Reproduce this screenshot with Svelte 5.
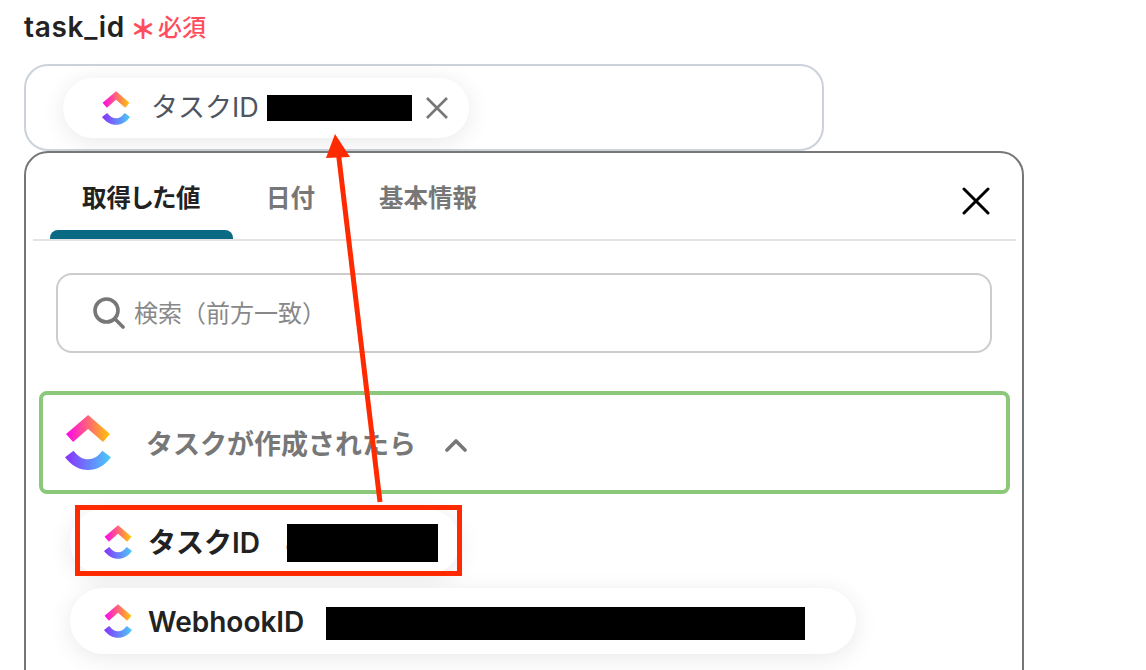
<script lang="ts">
	const tabs = ['取得した値', '日付', '基本情報'];
</script>

{#snippet logo(cls: string)}
	<svg class={cls} viewBox="2 0 20 24">
		<path fill="url(#cu-bottom)" d="M2 18.439l3.69-2.828c1.961 2.56 4.044 3.739 6.363 3.739 2.307 0 4.33-1.166 6.203-3.704L22 18.405C19.298 22.065 15.941 24 12.053 24 8.178 24 4.788 22.078 2 18.439z"/>
		<path fill="url(#cu-top)" d="M12.04 6.15l-6.568 5.66-3.036-3.52L12.055 0l9.543 8.296-3.05 3.509z"/>
	</svg>
{/snippet}

<div class="page">
	<svg class="defs" width="0" height="0" aria-hidden="true">
		<defs>
			<linearGradient id="cu-bottom" gradientUnits="userSpaceOnUse" x1="2" y1="20" x2="22" y2="20">
				<stop offset="0" stop-color="#8930fd"/>
				<stop offset="1" stop-color="#49ccf9"/>
			</linearGradient>
			<linearGradient id="cu-top" gradientUnits="userSpaceOnUse" x1="2.4" y1="6" x2="21.6" y2="6">
				<stop offset="0" stop-color="#ff02f0"/>
				<stop offset="1" stop-color="#ffc800"/>
			</linearGradient>
		</defs>
	</svg>

	<div class="label">
		<span class="name">task_id</span>
		<span class="star">＊</span>
		<span class="req">必須</span>
	</div>

	<div class="field">
		<div class="tag">
			{@render logo('logo-sm')}
			<span class="tag-text">タスクID</span>
			<span class="redact tag-redact"></span>
			<svg class="tag-x" viewBox="0 0 22 22" width="22" height="22">
				<path d="M1 1l20 20M21 1L1 21" stroke="#777" stroke-width="2.6" fill="none"/>
			</svg>
		</div>
	</div>

	<div class="panel">
		<div class="header">
			<div class="tabs">
				{#each tabs as tab, i}
					<div class="tab" class:active={i === 0}>
						<span class="tab-text">{tab}</span>
						<span class="bar"></span>
					</div>
				{/each}
			</div>
			<svg class="close" viewBox="0 0 28 28" width="28" height="28">
				<path d="M2 2l24 24M26 2L2 26" stroke="#000" stroke-width="3" stroke-linecap="round" fill="none"/>
			</svg>
		</div>

		<div class="search">
			<svg viewBox="0 0 32 32" width="32" height="32">
				<circle cx="13.5" cy="13.5" r="11.5" stroke="#777" stroke-width="3.6" fill="none"/>
				<path d="M22 22l8 8" stroke="#777" stroke-width="3.6" stroke-linecap="round"/>
			</svg>
			<span>検索（前方一致）</span>
		</div>

		<div class="group">
			{@render logo('logo-lg')}
			<span class="group-text">タスクが作成されたら</span>
			<svg class="chev" viewBox="0 0 22 14" width="22" height="14">
				<path d="M2 12l9-9 9 9" stroke="#777" stroke-width="3.6" stroke-linecap="round" stroke-linejoin="round" fill="none"/>
			</svg>
		</div>

		<div class="results">
			<div class="item first">
				{@render logo('logo-sm')}
				<span class="item-text">タスクID</span>
				<span class="val">8</span>
				<span class="redact r1"></span>
			</div>
			<div class="item second">
				{@render logo('logo-sm')}
				<span class="item-text">WebhookID</span>
				<span class="redact r2"></span>
			</div>
		</div>
	</div>

	<!-- annotation drawn on top of the screenshot -->
	<div class="red-box"></div>
	<svg class="arrow" width="1146" height="670" viewBox="0 0 1146 670">
		<path d="M380 502L338 150" stroke="#ff2a00" stroke-width="5" fill="none"/>
		<polygon points="335,134 350,157 326,158" fill="#ff2a00"/>
	</svg>
</div>

<style>
	:global(body) {
		margin: 0;
		background: #fff;
	}
	.page {
		position: relative;
		height: 670px;
		overflow: hidden;
		padding: 12px 0 0 24px;
		box-sizing: border-box;
		font-family: Inter, 'Noto Sans CJK JP', sans-serif;
		color: #222;
	}
	.defs {
		position: absolute;
	}
	.label {
		display: flex;
		align-items: center;
		height: 32px;
	}
	.name {
		font-size: 28px;
		font-weight: 600;
		color: #222;
		letter-spacing: 0.7px;
		line-height: 32px;
		margin-top: -2px;
	}
	.star {
		font-size: 26px;
		color: #ff4d5e;
		margin-left: 5px;
		font-weight: 900;
		line-height: 1;
		padding-top: 4px;
	}
	.req {
		font-size: 24px;
		font-weight: 500;
		color: #ff4d5e;
		margin-left: 2px;
		line-height: 32px;
	}
	.field {
		box-sizing: border-box;
		width: 800px;
		height: 87px;
		margin-top: 20px;
		padding: 12px 0 0 37px;
		border: 2px solid #ccd1da;
		border-radius: 24px;
	}
	.tag {
		display: flex;
		align-items: center;
		box-sizing: border-box;
		width: 406px;
		height: 60px;
		padding-left: 39px;
		border-radius: 30px;
		background: #fff;
		box-shadow: 0 4px 24px rgba(0, 0, 0, 0.09);
	}
	.logo-sm {
		flex: none;
		width: 28px;
		height: 34px;
	}
	.logo-lg {
		flex: none;
		width: 46px;
		height: 55px;
	}
	.tag-text {
		margin-left: 21px;
		font-size: 27px;
		color: #4e5560;
		width: 116px;
		line-height: 34px;
	}
	.redact {
		display: block;
		flex: none;
		background: #000;
		position: relative;
	}
	.tag-redact {
		width: 145px;
		height: 26px;
	}
	.tag-x {
		margin-left: 14px;
	}
	.panel {
		box-sizing: border-box;
		width: 1000px;
		height: 640px;
		border: 2px solid #777;
		border-radius: 24px;
		background: #fff;
	}
	.header {
		display: flex;
		justify-content: space-between;
		height: 86px;
		margin: 0 6px 0 7px;
		padding: 0 26px 0 17px;
		border-bottom: 2px solid #e3e3e3;
	}
	.tabs {
		display: flex;
	}
	.tab {
		display: flex;
		flex-direction: column;
		justify-content: flex-end;
		font-size: 24.5px;
		font-weight: 700;
		color: #777;
		font-feature-settings: 'palt';
	}
	.tab.active {
		color: #222;
	}
	.tab-text {
		padding: 0 33px;
		margin-bottom: 16px;
		line-height: 32px;
		text-align: center;
	}
	.tab:nth-child(2) .tab-text {
		padding-right: 31px;
	}
	.active .tab-text {
		width: 117px;
		white-space: nowrap;
		text-indent: -1px;
	}
	.bar {
		height: 9px;
		border-radius: 8px 8px 0 0;
	}
	.active .bar {
		background: #0a6a84;
	}
	.close {
		margin-top: 34px;
	}
	.search {
		display: flex;
		align-items: center;
		box-sizing: border-box;
		width: 936px;
		height: 80px;
		margin: 32px 0 0 30px;
		padding-left: 35px;
		border: 2px solid #ccc;
		border-radius: 16px;
		font-size: 24px;
		color: #888;
	}
	.search span {
		margin: 2px 0 0 9px;
		line-height: 32px;
	}
	.group {
		display: flex;
		align-items: center;
		box-sizing: border-box;
		width: 971px;
		height: 103px;
		margin: 38px 0 0 13px;
		padding-left: 22px;
		border: 4px solid #8cc87a;
		border-radius: 8px;
	}
	.group-text {
		margin: 4px 0 0 35px;
		font-size: 27px;
		font-weight: 600;
		color: #777;
		line-height: 36px;
	}
	.chev {
		margin-left: 29px;
		margin-top: 4px;
	}
	.results {
		display: flex;
		flex-direction: column;
		align-items: flex-start;
		margin-left: 44px;
	}
	.item {
		display: flex;
		align-items: center;
		box-sizing: border-box;
		height: 66px;
		padding-left: 34px;
		border-radius: 33px;
		background: #fff;
		box-shadow: 0 4px 24px rgba(0, 0, 0, 0.09);
	}
	.first {
		width: 390px;
		margin-top: 15px;
	}
	.second {
		width: 786px;
		margin-top: 13px;
	}
	.item-text {
		margin: 2px 0 0 16px;
		font-size: 28px;
		font-weight: 600;
		color: #222;
		line-height: 36px;
	}
	.val {
		margin: 2px -13px 0 25px;
		font-size: 24px;
		color: #888;
	}
	.r1 {
		width: 151px;
		height: 38px;
		margin-top: 2px;
	}
	.r2 {
		width: 479px;
		height: 33px;
		margin: 4px 0 0 22px;
	}
	.red-box {
		position: absolute;
		left: 75px;
		top: 505px;
		box-sizing: border-box;
		width: 387px;
		height: 71px;
		border: 5px solid #ff2a00;
	}
	.arrow {
		position: absolute;
		left: 0;
		top: 0;
	}
</style>
